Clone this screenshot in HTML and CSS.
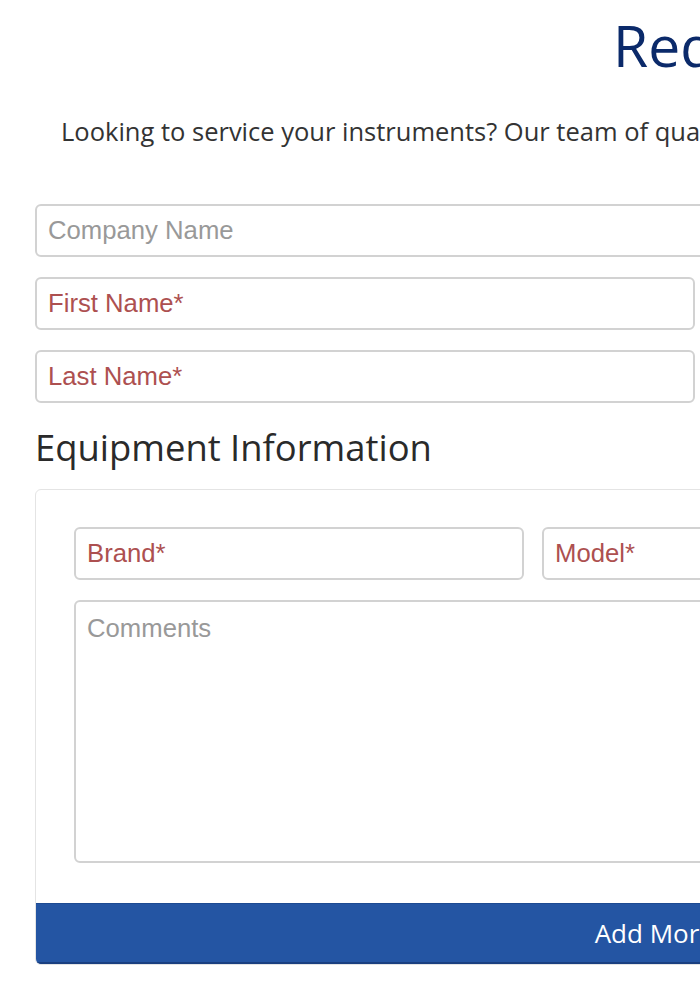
FILE: index.html
```html
<!DOCTYPE html>
<html lang="en">
<head>
<meta charset="utf-8">
<title>Request Service</title>
<link rel="stylesheet" href="styles.css">
</head>
<body>
<div class="page">
  <h1 class="title">Request Service</h1>
  <p class="intro">Looking to service your instruments? Our team of qualified technicians is ready to help with calibration and repair.</p>
  <form class="form">
    <input class="input" type="text" placeholder="Company Name">
    <div class="row">
      <input class="input required" type="text" placeholder="First Name*">
      <input class="input required" type="text" placeholder="Email*">
    </div>
    <div class="row">
      <input class="input required" type="text" placeholder="Last Name*">
      <input class="input required" type="text" placeholder="Phone*">
    </div>
    <h2 class="section-title">Equipment Information</h2>
    <div class="panel">
      <div class="panel-body">
        <div class="equip-row">
          <input class="input required" type="text" placeholder="Brand*">
          <input class="input required" type="text" placeholder="Model*">
          <input class="input required" type="text" placeholder="Serial Number*">
        </div>
        <textarea class="input textarea" placeholder="Comments"></textarea>
      </div>
      <button class="add-btn" type="button">Add More Equipment</button>
    </div>
  </form>
</div>
</body>
</html>
```
FILE: styles.css
```css
html, body {
  margin: 0;
  padding: 0;
  background: #ffffff;
}
body {
  width: 700px;
  height: 1000px;
  overflow: hidden;
  font-family: "Open Sans", "Liberation Sans", sans-serif;
  color: #333333;
}
.page {
  width: 1378px;
  padding: 0 35px;
}
.title {
  margin: 0;
  padding: 12px 0 0 578px;
  font-size: 57px;
  line-height: 66px;
  font-weight: 400;
  color: #0b2a6a;
  white-space: nowrap;
}
.intro {
  margin: 36px 0 0;
  padding-left: 26px;
  font-size: 25.5px;
  line-height: 34px;
  color: #333333;
  white-space: nowrap;
}
.form {
  margin-top: 56px;
  display: flex;
  flex-direction: column;
  gap: 20px;
}
.row {
  display: grid;
  grid-template-columns: 660px 660px;
  gap: 18px;
}
.input {
  display: block;
  box-sizing: border-box;
  width: 100%;
  height: 53px;
  margin: 0;
  padding: 0 11px;
  border: 2px solid #d2d2d2;
  border-radius: 6px;
  background: #ffffff;
  font-family: "Liberation Sans", Arial, sans-serif;
  font-size: 25.7px;
  color: #555555;
  outline: none;
}
.input::placeholder {
  color: #999999;
  opacity: 1;
}
.input.required::placeholder {
  color: #ad5050;
}
.section-title {
  margin: 1px 0 0;
  padding-left: 0;
  font-size: 36.4px;
  line-height: 46px;
  font-weight: 400;
  color: #2a2a2a;
}
.panel {
  margin-top: -1px;
  border: 1px solid #e4e4e4;
  border-radius: 6px;
  overflow: hidden;
}
.panel-body {
  padding: 37px 38px 40px;
  display: flex;
  flex-direction: column;
  gap: 20px;
}
.equip-row {
  display: grid;
  grid-template-columns: 450px 450px 1fr;
  gap: 18px;
}
.textarea {
  height: 263px;
  padding-top: 12px;
  resize: none;
  line-height: 28px;
}
.add-btn {
  display: block;
  width: 100%;
  height: 61px;
  margin: 0;
  padding: 0;
  border: 0;
  border-top: 1px solid #1d4a92;
  border-bottom: 2px solid #1a3f80;
  background: #2455a3;
  color: #ffffff;
  font-family: "Open Sans", "Liberation Sans", sans-serif;
  font-size: 26px;
  cursor: pointer;
}
```
